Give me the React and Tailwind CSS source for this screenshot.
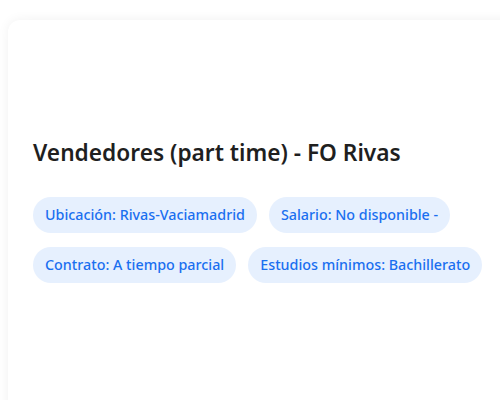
import React from 'react';

const chips = [
  'Ubicación: Rivas-Vaciamadrid',
  'Salario: No disponible -',
  'Contrato: A tiempo parcial',
  'Estudios mínimos: Bachillerato',
];

export default function App() {
  return (
    <div
      className="w-[500px] h-[400px] overflow-hidden bg-white"
      style={{ fontFamily: '"Noto Sans", "Open Sans", sans-serif' }}
    >
      <div className="ml-2 mt-5 w-[520px] h-[420px] rounded-xl bg-white shadow-[0_0_12px_rgba(0,0,0,0.06)] px-[25px] pt-[117px]">
        <h1 className="text-[22.7px] leading-[32px] font-semibold text-[#1f1f1f]">
          Vendedores (part time) - FO Rivas
        </h1>
        <div className="mt-[28px] flex flex-wrap gap-x-3 gap-y-[14px] w-[460px]">
          {chips.map((c) => (
            <span
              key={c}
              className="rounded-full bg-[#e6f0fe] px-3 py-2 text-[14.3px] leading-5 text-[#1a6ff0] font-medium"
            >
              {c}
            </span>
          ))}
        </div>
      </div>
    </div>
  );
}
